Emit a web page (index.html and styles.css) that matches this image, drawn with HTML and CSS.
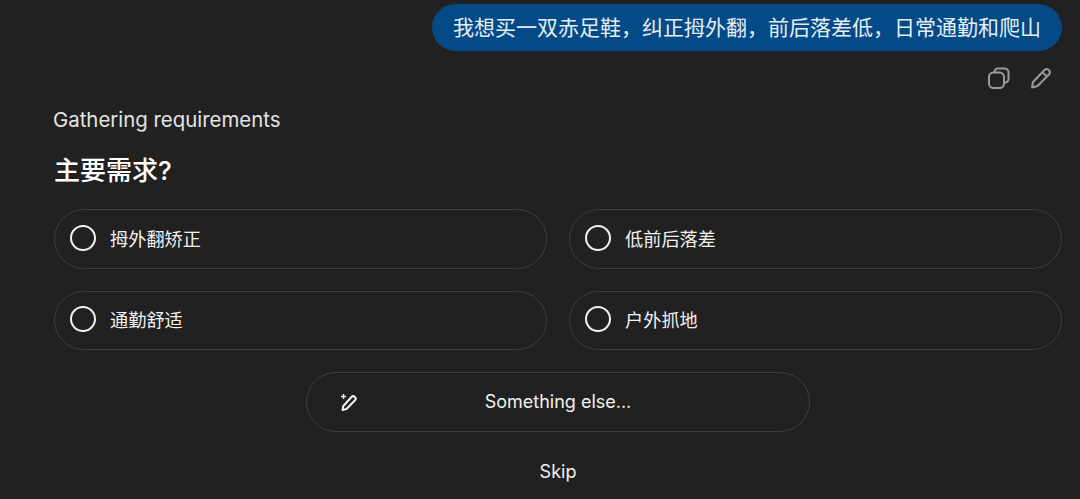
FILE: index.html
```html
<!DOCTYPE html>
<html lang="zh-CN">
<head>
    <meta charset="UTF-8">
    <meta name="viewport" content="width=device-width, initial-scale=1.0">
    <title>Gathering requirements</title>
    <link rel="stylesheet" href="styles.css">
</head>
<body>
    <div class="user-row">
        <div class="bubble">我想买一双赤足鞋，纠正拇外翻，前后落差低，日常通勤和爬山</div>
    </div>
    <div class="actions">
        <svg class="action-icon" width="24" height="24" viewBox="0 0 24 24" fill="none" stroke="#9a9a9a" stroke-width="2" stroke-linejoin="round">
            <rect x="2" y="6.500" width="15" height="15.500" rx="4.500"/>
            <path d="M7.500 6.500V6a3.500 3.500 0 0 1 3.500-3.500h6.500A4 4 0 0 1 21.500 6.500V13a3.500 3.500 0 0 1-3.500 3.500H17"/>
        </svg>
        <svg class="action-icon" width="24" height="24" viewBox="0 0 24 24" fill="none" stroke="#9a9a9a" stroke-width="2" stroke-linejoin="round">
            <path d="M3 21.500l1-5.500L15.500 4a3.200 3.200 0 0 1 4.700 4.300L8.500 20z"/>
            <path d="M13.500 6.500l4.700 4"/>
        </svg>
    </div>
    <div class="status">Gathering requirements</div>
    <h2 class="question">主要需求?</h2>
    <div class="options">
        <div class="option"><span class="radio"></span>拇外翻矫正</div>
        <div class="option"><span class="radio"></span>低前后落差</div>
        <div class="option"><span class="radio"></span>通勤舒适</div>
        <div class="option"><span class="radio"></span>户外抓地</div>
    </div>
    <div class="else-row">
        <div class="else-btn">
            <svg class="else-icon" width="20" height="20" viewBox="0 0 20 20" fill="none" stroke="#f2f2f2" stroke-width="2" stroke-linejoin="round">
                <path d="M3.500 18l.8-4L12.500 5a2.400 2.400 0 0 1 3.500 3.300L7.500 17z"/>
                <path d="M2 4.500h5M4.500 2v5" stroke-width="1.400"/>
            </svg>
            <span>Something else...</span>
        </div>
    </div>
    <div class="skip">Skip</div>
</body>
</html>
```

FILE: styles.css
```css
* {
    box-sizing: border-box;
}

body {
    margin: 0;
    height: 499px;
    overflow: hidden;
    background-color: #212121;
    color: #f2f2f2;
    font-family: Inter, "Noto Sans CJK SC", sans-serif;
    padding: 4px 18px 0 54px;
}

.user-row {
    display: flex;
    justify-content: flex-end;
}

.bubble {
    height: 47px;
    line-height: 47px;
    padding: 0 21px;
    border-radius: 24px;
    background-color: #044a86;
    color: #e6eef5;
    font-size: 21px;
    white-space: nowrap;
}

.actions {
    display: flex;
    justify-content: flex-end;
    gap: 18px;
    margin-top: 15px;
    padding-right: 9px;
}

.status {
    margin-top: 16px;
    margin-left: -1px;
    font-size: 20.400px;
    line-height: 28px;
    color: #e4e4e4;
}

.question {
    margin: 20px 0 0;
    font-size: 26px;
    line-height: 34px;
    font-weight: 500;
    color: #fff;
}

.options {
    display: grid;
    grid-template-columns: 1fr 1fr;
    gap: 22px;
    margin-top: 21px;
}

.option {
    display: flex;
    align-items: center;
    gap: 14px;
    height: 59.500px;
    padding: 0 15px 2px;
    border: 1px solid #3f3f3f;
    border-radius: 30px;
    font-size: 18.200px;
    color: #f2f2f2;
}

.radio {
    width: 26px;
    height: 26px;
    border: 2.600px solid #f2f2f2;
    border-radius: 50%;
}

.else-row {
    display: flex;
    justify-content: center;
    margin-top: 22px;
}

.else-btn {
    position: relative;
    width: 504px;
    height: 59.500px;
    display: flex;
    align-items: center;
    justify-content: center;
    border: 1px solid #3f3f3f;
    border-radius: 30px;
    font-size: 18px;
}

.else-icon {
    position: absolute;
    left: 32px;
    top: 19px;
}

.skip {
    margin-top: 27px;
    text-align: center;
    font-size: 18px;
    line-height: 26px;
}
```
